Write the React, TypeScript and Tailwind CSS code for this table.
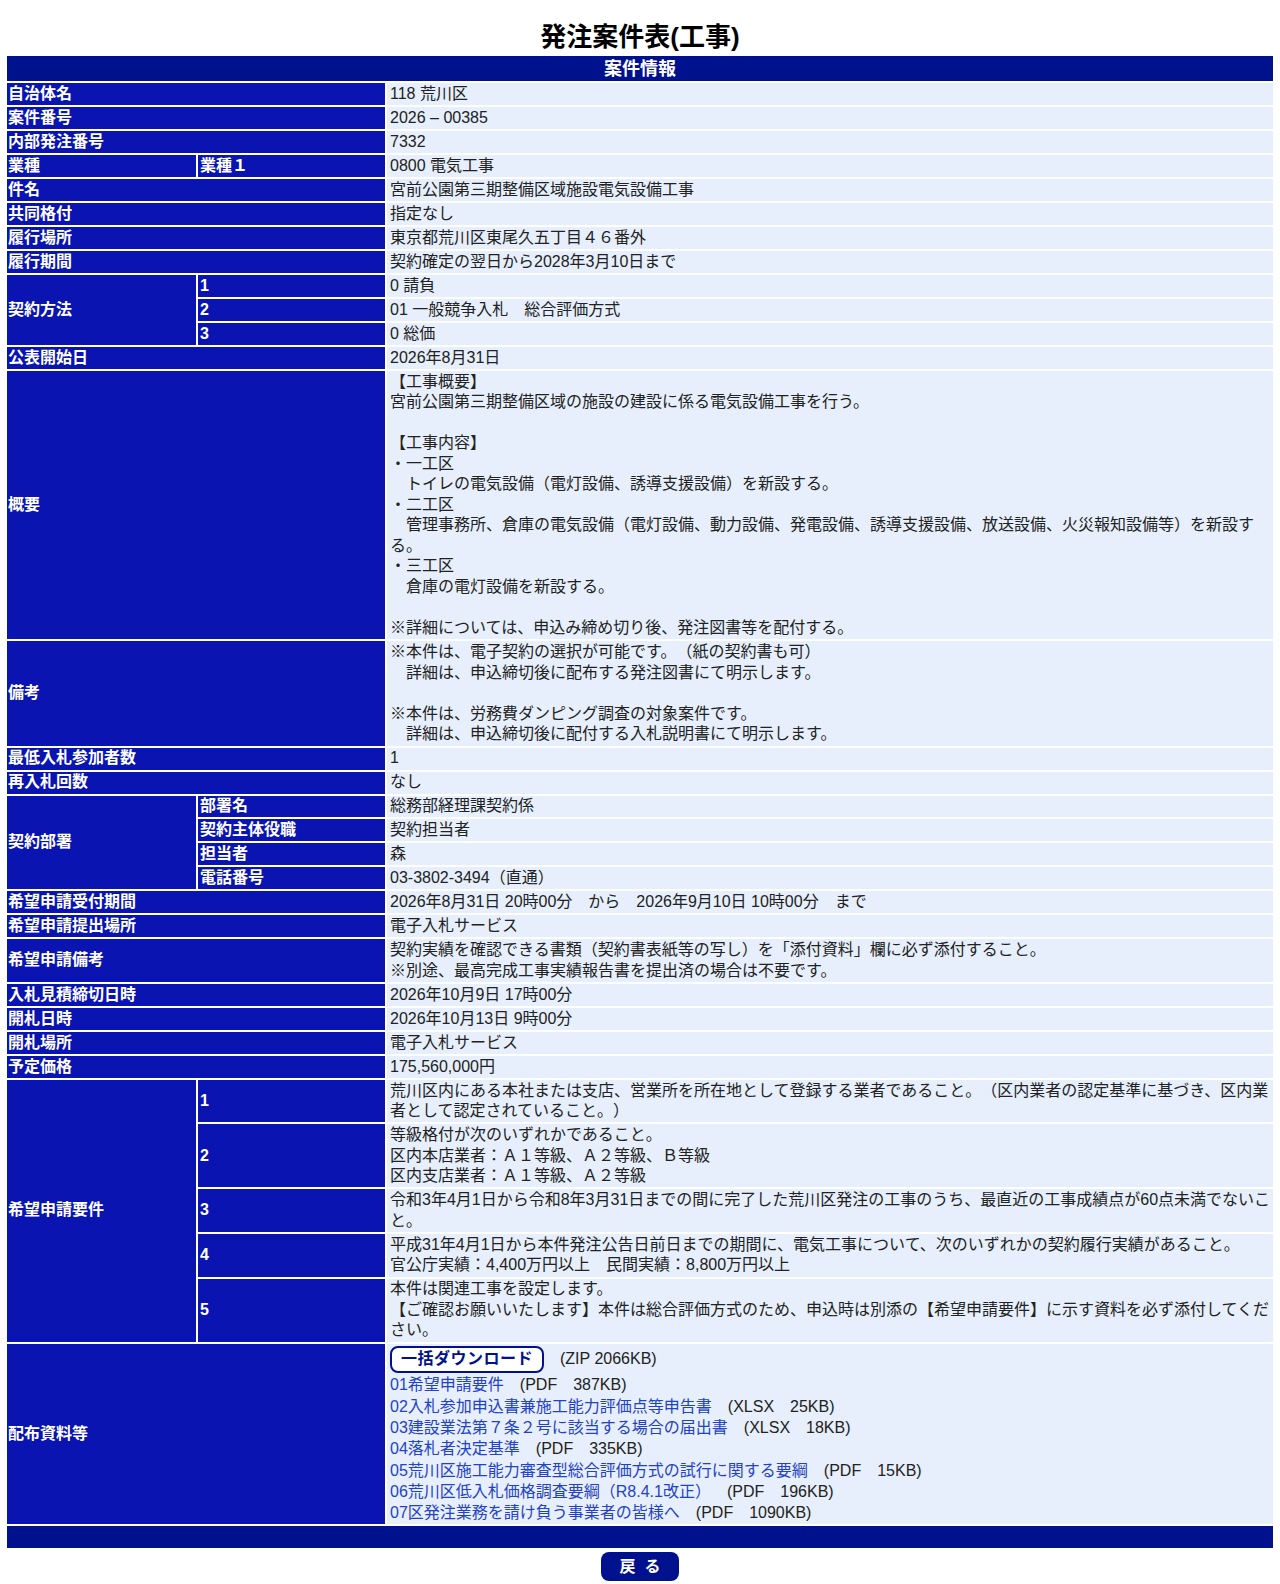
import React from "react";

const LBL =
  "bg-[#0a14b0] text-white font-bold text-[16px] leading-[20.55px] py-[0.725px] text-left align-middle";
const VAL =
  "bg-[#e6effb] text-[#222] text-[16px] leading-[20.55px] pl-[3px] pr-0 py-[0.725px] text-left align-top";

function Lines({ lines }: { lines: string[] }) {
  return (
    <>
      {lines.map((l, i) => (
        <div key={i}>{l === "" ? "\u00a0" : l}</div>
      ))}
    </>
  );
}

function Row1({ label, value }: { label: string; value: React.ReactNode }) {
  return (
    <tr>
      <td colSpan={2} className={`${LBL} px-[1px]`}>
        {label}
      </td>
      <td className={VAL}>{value}</td>
    </tr>
  );
}

const files: [string, string][] = [
  ["01希望申請要件", "(PDF　387KB)"],
  ["02入札参加申込書兼施工能力評価点等申告書", "(XLSX　25KB)"],
  ["03建設業法第７条２号に該当する場合の届出書", "(XLSX　18KB)"],
  ["04落札者決定基準", "(PDF　335KB)"],
  ["05荒川区施工能力審査型総合評価方式の試行に関する要綱", "(PDF　15KB)"],
  ["06荒川区低入札価格調査要綱（R8.4.1改正）", "(PDF　196KB)"],
  ["07区発注業務を請け負う事業者の皆様へ", "(PDF　1090KB)"],
];

export default function App() {
  return (
    <div className="w-[1280px] min-h-[1584px] bg-white font-['Liberation_Sans','Noto_Sans_CJK_JP',sans-serif] text-[#222] [text-spacing-trim:space-all]">
      <div className="pt-[20px] text-center text-[26px] leading-[34px] font-bold text-black">
        発注案件表(工事)
      </div>
      <table className="ml-[5px] w-[1270px] table-fixed border-separate border-spacing-[2px]">
        <colgroup>
          <col className="w-[189px]" />
          <col className="w-[187px]" />
          <col />
        </colgroup>
        <tbody>
          <tr>
            <th
              colSpan={3}
              className="h-[25px] bg-[#00118d] text-white font-bold text-[18px] leading-[22px] text-center"
            >
              案件情報
            </th>
          </tr>
          <Row1 label="自治体名" value="118 荒川区" />
          <Row1 label="案件番号" value="2026 – 00385" />
          <Row1 label="内部発注番号" value="7332" />
          <tr>
            <td className={`${LBL} px-[1px]`}>業種</td>
            <td className={`${LBL} px-[2px]`}>業種１</td>
            <td className={VAL}>0800 電気工事</td>
          </tr>
          <Row1 label="件名" value="宮前公園第三期整備区域施設電気設備工事" />
          <Row1 label="共同格付" value="指定なし" />
          <Row1 label="履行場所" value="東京都荒川区東尾久五丁目４６番外" />
          <Row1 label="履行期間" value="契約確定の翌日から2028年3月10日まで" />
          <tr>
            <td rowSpan={3} className={`${LBL} px-[1px]`}>
              契約方法
            </td>
            <td className={`${LBL} px-[2px]`}>1</td>
            <td className={VAL}>0 請負</td>
          </tr>
          <tr>
            <td className={`${LBL} px-[2px]`}>2</td>
            <td className={VAL}>01 一般競争入札　総合評価方式</td>
          </tr>
          <tr>
            <td className={`${LBL} px-[2px]`}>3</td>
            <td className={VAL}>0 総価</td>
          </tr>
          <Row1 label="公表開始日" value="2026年8月31日" />
          <Row1
            label="概要"
            value={
              <Lines
                lines={[
                  "【工事概要】",
                  "宮前公園第三期整備区域の施設の建設に係る電気設備工事を行う。",
                  "",
                  "【工事内容】",
                  "・一工区",
                  "　トイレの電気設備（電灯設備、誘導支援設備）を新設する。",
                  "・二工区",
                  "　管理事務所、倉庫の電気設備（電灯設備、動力設備、発電設備、誘導支援設備、放送設備、火災報知設備等）を新設する。",
                  "・三工区",
                  "　倉庫の電灯設備を新設する。",
                  "",
                  "※詳細については、申込み締め切り後、発注図書等を配付する。",
                ]}
              />
            }
          />
          <Row1
            label="備考"
            value={
              <Lines
                lines={[
                  "※本件は、電子契約の選択が可能です。（紙の契約書も可）",
                  "　詳細は、申込締切後に配布する発注図書にて明示します。",
                  "",
                  "※本件は、労務費ダンピング調査の対象案件です。",
                  "　詳細は、申込締切後に配付する入札説明書にて明示します。",
                ]}
              />
            }
          />
          <Row1 label="最低入札参加者数" value="1" />
          <Row1 label="再入札回数" value="なし" />
          <tr>
            <td rowSpan={4} className={`${LBL} px-[1px]`}>
              契約部署
            </td>
            <td className={`${LBL} px-[2px]`}>部署名</td>
            <td className={VAL}>総務部経理課契約係</td>
          </tr>
          <tr>
            <td className={`${LBL} px-[2px]`}>契約主体役職</td>
            <td className={VAL}>契約担当者</td>
          </tr>
          <tr>
            <td className={`${LBL} px-[2px]`}>担当者</td>
            <td className={VAL}>森</td>
          </tr>
          <tr>
            <td className={`${LBL} px-[2px]`}>電話番号</td>
            <td className={VAL}>03-3802-3494（直通）</td>
          </tr>
          <Row1
            label="希望申請受付期間"
            value="2026年8月31日 20時00分　から　2026年9月10日 10時00分　まで"
          />
          <Row1 label="希望申請提出場所" value="電子入札サービス" />
          <Row1
            label="希望申請備考"
            value={
              <Lines
                lines={[
                  "契約実績を確認できる書類（契約書表紙等の写し）を「添付資料」欄に必ず添付すること。",
                  "※別途、最高完成工事実績報告書を提出済の場合は不要です。",
                ]}
              />
            }
          />
          <Row1 label="入札見積締切日時" value="2026年10月9日 17時00分" />
          <Row1 label="開札日時" value="2026年10月13日 9時00分" />
          <Row1 label="開札場所" value="電子入札サービス" />
          <Row1 label="予定価格" value="175,560,000円" />
          <tr>
            <td rowSpan={5} className={`${LBL} px-[1px]`}>
              希望申請要件
            </td>
            <td className={`${LBL} px-[2px]`}>1</td>
            <td className={VAL}>
              荒川区内にある本社または支店、営業所を所在地として登録する業者であること。（区内業者の認定基準に基づき、区内業者として認定されていること。）
            </td>
          </tr>
          <tr>
            <td className={`${LBL} px-[2px]`}>2</td>
            <td className={VAL}>
              <Lines
                lines={[
                  "等級格付が次のいずれかであること。",
                  "区内本店業者：Ａ１等級、Ａ２等級、Ｂ等級",
                  "区内支店業者：Ａ１等級、Ａ２等級",
                ]}
              />
            </td>
          </tr>
          <tr>
            <td className={`${LBL} px-[2px]`}>3</td>
            <td className={VAL}>
              令和3年4月1日から令和8年3月31日までの間に完了した荒川区発注の工事のうち、最直近の工事成績点が60点未満でないこと。
            </td>
          </tr>
          <tr>
            <td className={`${LBL} px-[2px]`}>4</td>
            <td className={VAL}>
              <Lines
                lines={[
                  "平成31年4月1日から本件発注公告日前日までの期間に、電気工事について、次のいずれかの契約履行実績があること。",
                  "官公庁実績：4,400万円以上　民間実績：8,800万円以上",
                ]}
              />
            </td>
          </tr>
          <tr>
            <td className={`${LBL} px-[2px]`}>5</td>
            <td className={VAL}>
              <Lines
                lines={[
                  "本件は関連工事を設定します。",
                  "【ご確認お願いいたします】本件は総合評価方式のため、申込時は別添の【希望申請要件】に示す資料を必ず添付してください。",
                ]}
              />
            </td>
          </tr>
          <tr>
            <td colSpan={2} className={`${LBL} px-[1px]`}>
              配布資料等
            </td>
            <td className={VAL}>
              <div className="h-[30px] flex items-center">
                <button className="w-[154px] h-[27px] rounded-[8px] border-2 border-[#00118d] bg-white text-[#00118d] font-bold text-[16px] leading-[20px] tracking-[0.5px] text-center">
                  一括ダウンロード
                </button>
                <span className="ml-[16px]">(ZIP 2066KB)</span>
              </div>
              {files.map(([name, info]) => (
                <div key={name} className="leading-[21.3px]">
                  <a href="#" className="text-[#2442c4]">
                    {name}
                  </a>
                  <span>　{info}</span>
                </div>
              ))}
            </td>
          </tr>
          <tr>
            <td colSpan={3} className="h-[22px] bg-[#00118d]"></td>
          </tr>
        </tbody>
      </table>
      <button className="mx-auto mt-[2px] block w-[78px] h-[29px] rounded-[8px] bg-[#00118d] text-white font-bold text-[16px] leading-[20px] tracking-[9px] pl-[9px]">
        戻る
      </button>
    </div>
  );
}
